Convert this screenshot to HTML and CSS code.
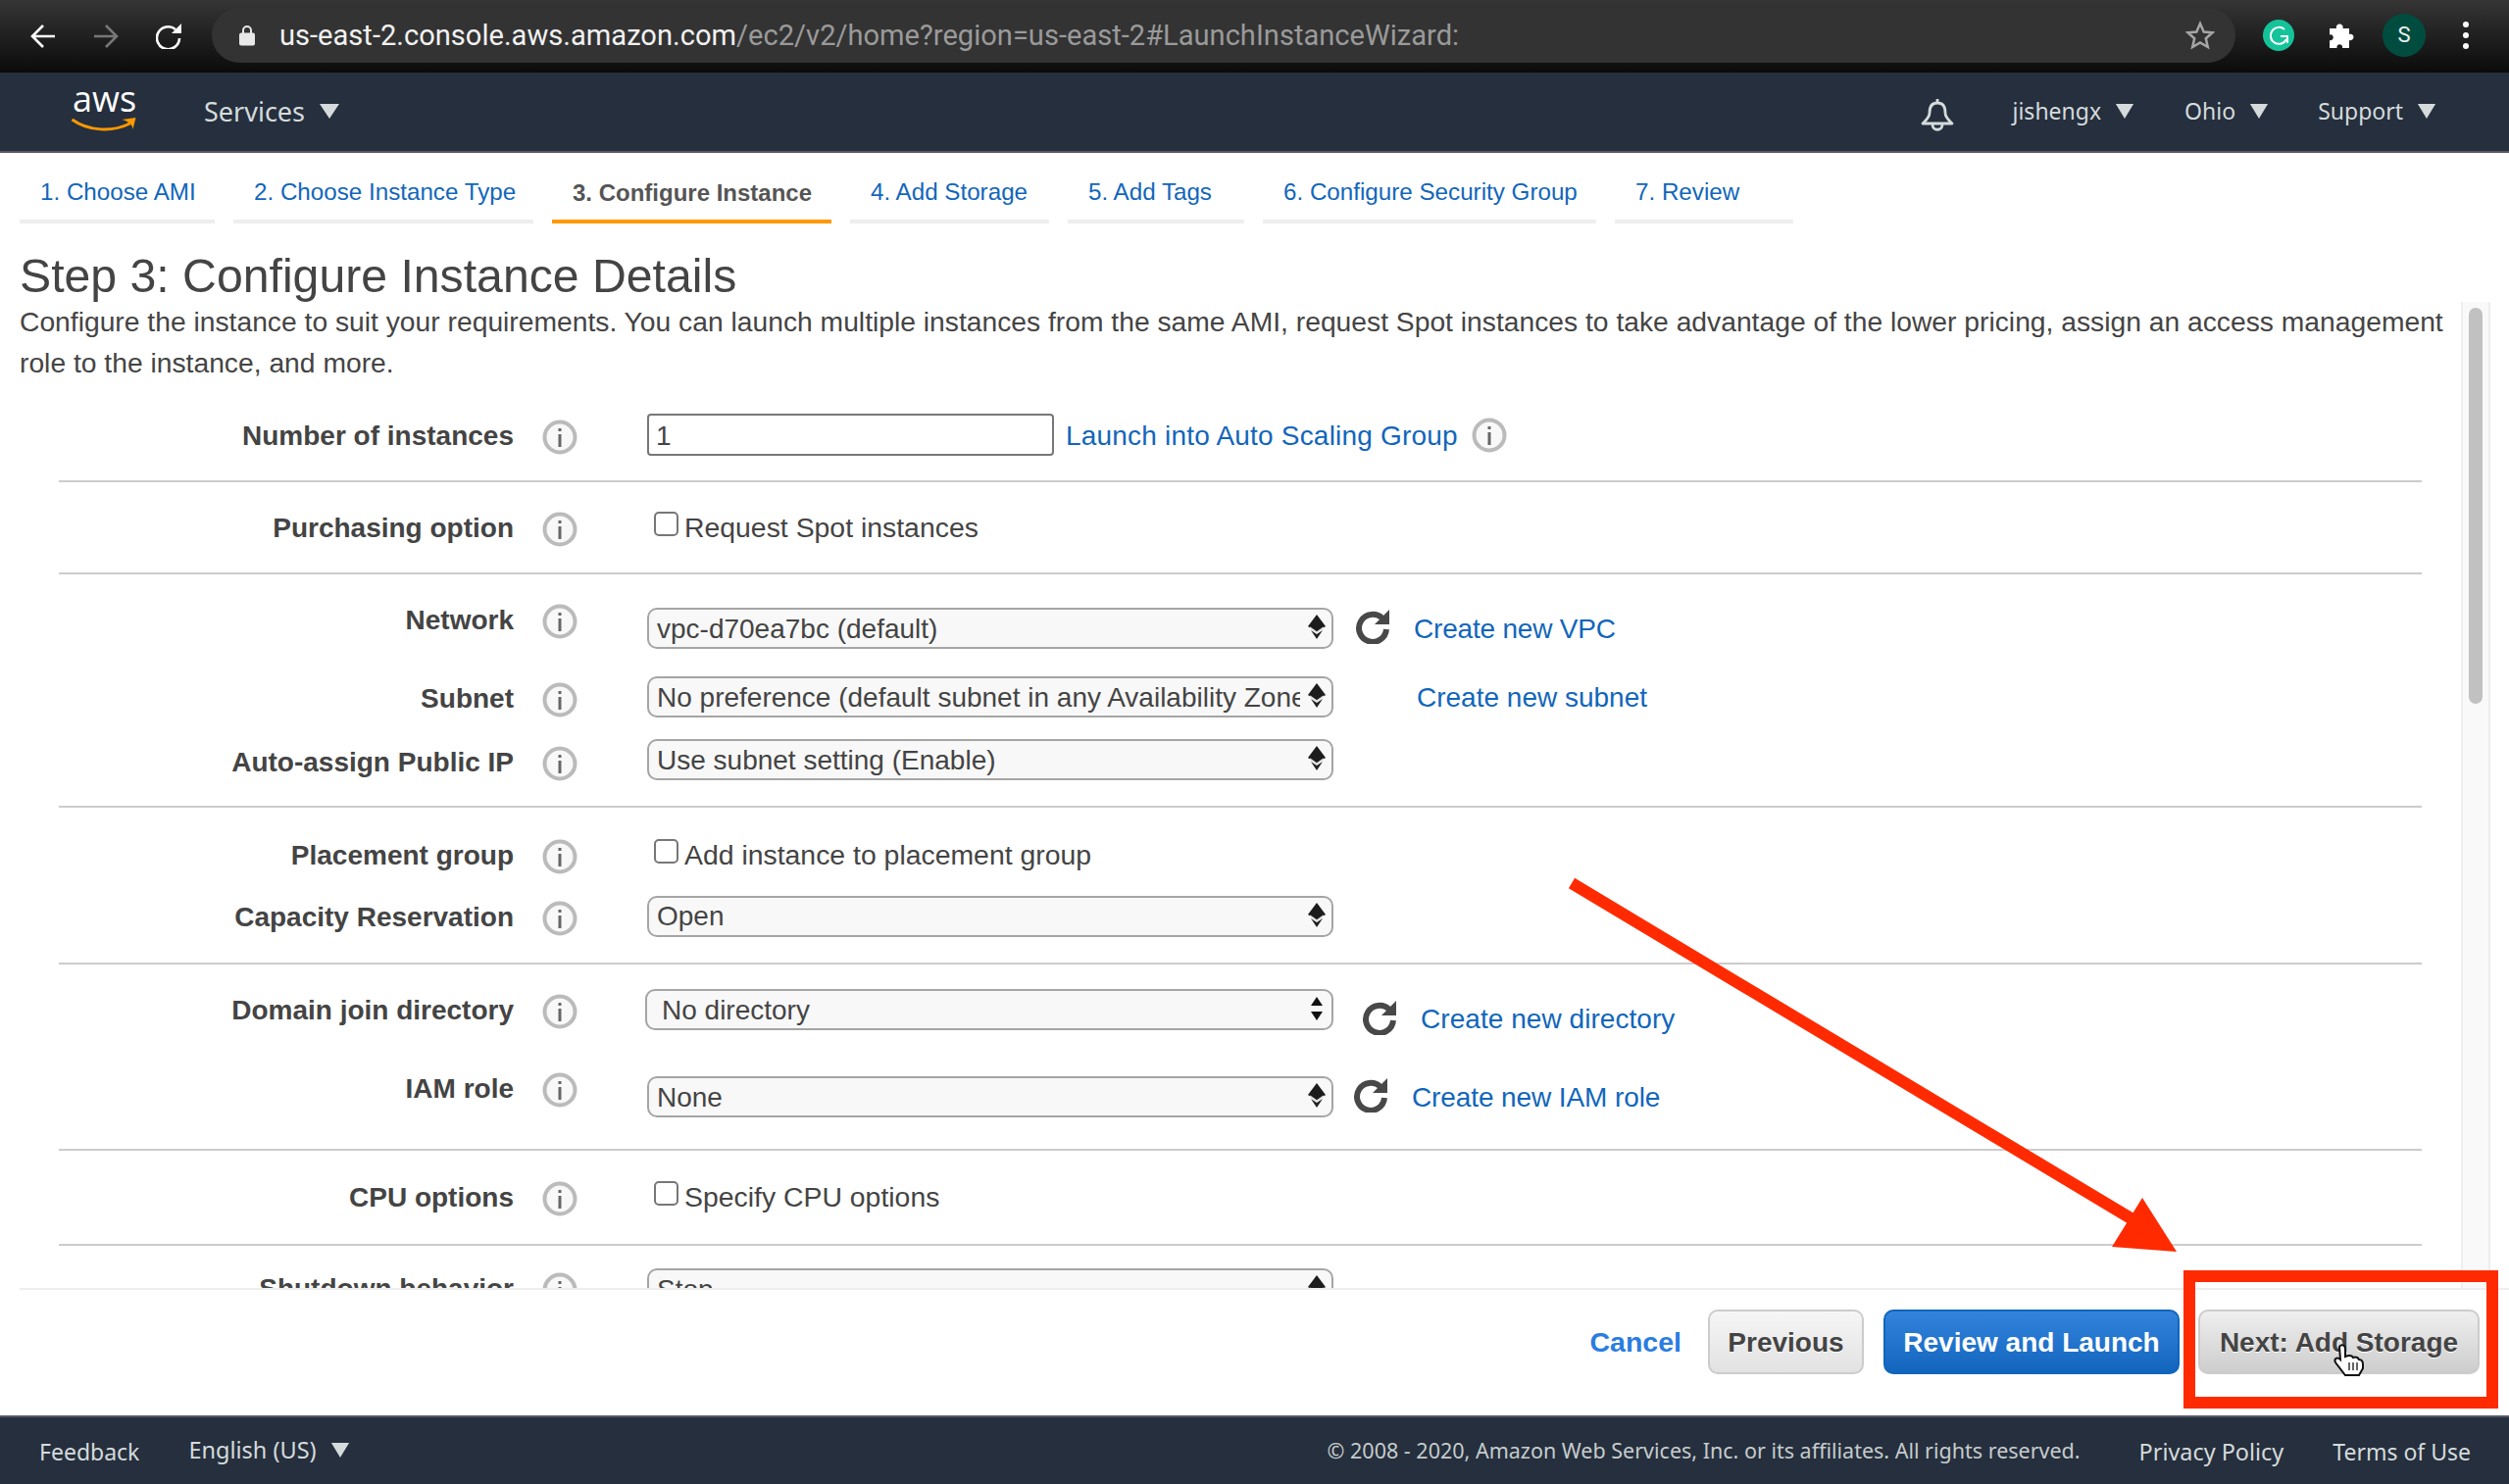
FILE: index.html
```html
<!DOCTYPE html>
<html lang="en">
<head>
<meta charset="utf-8">
<title>Launch instance wizard</title>
<link rel="stylesheet" href="styles.css">
</head>
<body>
<svg class="defs" width="0" height="0" aria-hidden="true">
  <symbol id="tri" viewBox="0 0 22 16" preserveAspectRatio="none"><path d="M1 0H21L11 16Z"/></symbol>
  <symbol id="info" viewBox="0 0 36 36"><circle cx="18" cy="18" r="15.500" fill="#f8f8f8" stroke="#bbb" stroke-width="4"/><rect x="16.500" y="15" width="3" height="13" fill="#666"/><rect x="16.500" y="9" width="3" height="3" fill="#666"/></symbol>
  <symbol id="spin" viewBox="0 0 18 26"><path d="M9 0L18 12L9 18L0 12Z" fill="#1c1c1c"/><path d="M2 13L9 18L16 13" fill="none" stroke="#ddd" stroke-width="1.500"/><path d="M3 16L9 25L15 16L9 20Z" fill="#222"/></symbol>
  <symbol id="spin-plain" viewBox="0 0 18 26"><path d="M9 1L15 10H3Z" fill="#111"/><path d="M3 16H15L9 25Z" fill="#111"/></symbol>
  <symbol id="refresh" viewBox="0 0 36 36"><path d="M28 10A14 14 0 1 0 32 21" fill="none" stroke="#484848" stroke-width="6"/><path d="M35 1V16H20Z" fill="#484848"/></symbol>
</svg>
<div class="page">
  <header class="browser">
    <svg class="bicon bicon-back" viewBox="0 0 26 26"><path d="M25 13H3M13 2L2 13L13 24" fill="none" stroke="#fff" stroke-width="2.600"/></svg>
    <svg class="bicon bicon-fwd" viewBox="0 0 26 26"><path d="M1 13H23M13 2L24 13L13 24" fill="none" stroke="#777" stroke-width="2.600"/></svg>
    <svg class="bicon bicon-reload" viewBox="0 0 26 26"><path d="M20 6A11.500 11.500 0 1 0 24 15" fill="none" stroke="#fff" stroke-width="2.600"/><path d="M26 0V10H16Z" fill="#fff"/></svg>
    <div class="omnibox">
      <svg class="lock" viewBox="0 0 16 22"><path d="M4 9V6a4 4 0 0 1 8 0V9" fill="none" stroke="#e8e8e8" stroke-width="2"/><rect y="8.500" width="16" height="13" rx="2" fill="#e8e8e8"/></svg>
      <span class="url">us-east-2.console.aws.amazon.com<span class="url-path">/ec2/v2/home?region=us-east-2#LaunchInstanceWizard:</span></span>
      <svg class="star" viewBox="0 0 30 30"><path d="M15 3L18.700 11.500L27.500 12.300L20.800 18.200L22.800 27L15 22.400L7.200 27L9.200 18.200L2.500 12.300L11.300 11.500Z" fill="none" stroke="#a6a6a6" stroke-width="2.500"/></svg>
    </div>
    <div class="ext-g"><svg viewBox="0 0 32 32"><path d="M22 10A8.500 8.500 0 1 0 24 20" fill="none" stroke="#fff" stroke-width="2"/><path d="M18 17H25V24" fill="none" stroke="#fff" stroke-width="2"/></svg></div>
    <svg class="puzzle" viewBox="0 0 29 28"><path d="M2 7H9C7.500 1 17 1 15.500 7H22V13C28 11.500 28 20.500 22 19V27H15C16 22 8.500 22 9.500 27H2V19C7 20.500 7 12 2 13.500Z" fill="#fff"/></svg>
    <div class="avatar">S</div>
    <div class="kebab"><i></i><i></i><i></i></div>
  </header>

  <nav class="console-nav">
    <div class="logo">
      <span class="logo-text">aws</span>
      <svg class="smile" viewBox="0 0 66 16"><path d="M1 3C18 15 42 16 60 7" fill="none" stroke="#ff9900" stroke-width="3"/><path d="M52 3L66 1L63 13C63 9 59 5 52 3Z" fill="#ff9900"/></svg>
    </div>
    <span class="nav-item nav-services">Services<svg class="tri tri-lg"><use href="#tri"/></svg></span>
    <span class="spacer"></span>
    <svg class="bell" viewBox="0 0 34 34"><path d="M17 1V5M17 5C10 5 9 11 9 15C9 20 5 23 2 26H32C29 23 25 20 25 15C25 11 24 5 17 5Z" fill="none" stroke="#d5dbdb" stroke-width="2.800" stroke-linejoin="round"/><path d="M12 27C12 34 22 34 22 27" fill="none" stroke="#d5dbdb" stroke-width="2.800"/></svg>
    <span class="nav-item nav-user">jishengx<svg class="tri"><use href="#tri"/></svg></span>
    <span class="nav-item nav-region">Ohio<svg class="tri"><use href="#tri"/></svg></span>
    <span class="nav-item nav-support">Support<svg class="tri"><use href="#tri"/></svg></span>
  </nav>

  <main class="main">
    <div class="tabs">
      <a class="tab tab1">1. Choose AMI</a>
      <a class="tab tab2">2. Choose Instance Type</a>
      <a class="tab tab3 active">3. Configure Instance</a>
      <a class="tab tab4">4. Add Storage</a>
      <a class="tab tab5">5. Add Tags</a>
      <a class="tab tab6">6. Configure Security Group</a>
      <a class="tab tab7">7. Review</a>
    </div>
    <h1 class="title">Step 3: Configure Instance Details</h1>
    <div class="pane">
      <div class="scroll">
        <p class="desc">Configure the instance to suit your requirements. You can launch multiple instances from the same AMI, request Spot instances to take advantage of the lower pricing, assign an access management role to the instance, and more.</p>

        <section class="sec sec1">
          <div class="row r-num">
            <div class="lab"><span class="label">Number of instances</span><svg class="info"><use href="#info"/></svg></div>
            <div class="ctl"><div class="input">1</div><a class="link link-asg">Launch into Auto Scaling Group</a><svg class="info info-inline"><use href="#info"/></svg></div>
          </div>
        </section>

        <section class="sec sec2">
          <div class="row r-spot">
            <div class="lab"><span class="label">Purchasing option</span><svg class="info"><use href="#info"/></svg></div>
            <div class="ctl"><span class="check"></span><span class="check-text">Request Spot instances</span></div>
          </div>
        </section>

        <section class="sec sec3">
          <div class="row r-network">
            <div class="lab"><span class="label">Network</span><svg class="info"><use href="#info"/></svg></div>
            <div class="ctl"><div class="select"><span class="sel-text">vpc-d70ea7bc (default)</span><svg class="spin"><use href="#spin"/></svg></div><svg class="refresh"><use href="#refresh"/></svg><a class="link link-vpc">Create new VPC</a></div>
          </div>
          <div class="row r-subnet">
            <div class="lab"><span class="label">Subnet</span><svg class="info"><use href="#info"/></svg></div>
            <div class="ctl"><div class="select"><span class="sel-text">No preference (default subnet in any Availability Zone)</span><svg class="spin"><use href="#spin"/></svg></div><a class="link link-subnet">Create new subnet</a></div>
          </div>
          <div class="row r-auto">
            <div class="lab"><span class="label">Auto-assign Public IP</span><svg class="info"><use href="#info"/></svg></div>
            <div class="ctl"><div class="select"><span class="sel-text">Use subnet setting (Enable)</span><svg class="spin"><use href="#spin"/></svg></div></div>
          </div>
        </section>

        <section class="sec sec4">
          <div class="row r-place">
            <div class="lab"><span class="label">Placement group</span><svg class="info"><use href="#info"/></svg></div>
            <div class="ctl"><span class="check"></span><span class="check-text">Add instance to placement group</span></div>
          </div>
          <div class="row r-cap">
            <div class="lab"><span class="label">Capacity Reservation</span><svg class="info"><use href="#info"/></svg></div>
            <div class="ctl"><div class="select select-cap"><span class="sel-text">Open</span><svg class="spin"><use href="#spin"/></svg></div></div>
          </div>
        </section>

        <section class="sec sec5">
          <div class="row r-domain">
            <div class="lab"><span class="label">Domain join directory</span><svg class="info"><use href="#info"/></svg></div>
            <div class="ctl"><div class="select select-domain"><span class="sel-text">No directory</span><svg class="spin"><use href="#spin-plain"/></svg></div><svg class="refresh refresh-domain"><use href="#refresh"/></svg><a class="link link-dir">Create new directory</a></div>
          </div>
          <div class="row r-iam">
            <div class="lab"><span class="label">IAM role</span><svg class="info"><use href="#info"/></svg></div>
            <div class="ctl"><div class="select"><span class="sel-text">None</span><svg class="spin"><use href="#spin"/></svg></div><svg class="refresh refresh-iam"><use href="#refresh"/></svg><a class="link link-iam">Create new IAM role</a></div>
          </div>
        </section>

        <section class="sec sec6">
          <div class="row r-cpu">
            <div class="lab"><span class="label">CPU options</span><svg class="info"><use href="#info"/></svg></div>
            <div class="ctl"><span class="check"></span><span class="check-text">Specify CPU options</span></div>
          </div>
        </section>

        <section class="sec sec7">
          <div class="row r-shut">
            <div class="lab"><span class="label">Shutdown behavior</span><svg class="info"><use href="#info"/></svg></div>
            <div class="ctl"><div class="select"><span class="sel-text">Stop</span><svg class="spin"><use href="#spin"/></svg></div></div>
          </div>
        </section>
      </div>
      <div class="scrollbar"><div class="thumb"></div></div>
    </div>
  </main>

  <div class="actions">
    <a class="cancel">Cancel</a>
    <button class="btn btn-prev">Previous</button>
    <button class="btn btn-primary">Review and Launch</button>
    <button class="btn btn-next">Next: Add Storage</button>
  </div>

  <footer class="foot">
    <span class="foot-item foot-feedback">Feedback</span>
    <span class="foot-item foot-lang">English (US)<svg class="tri"><use href="#tri"/></svg></span>
    <span class="spacer"></span>
    <span class="foot-item foot-copy">© 2008 - 2020, Amazon Web Services, Inc. or its affiliates. All rights reserved.</span>
    <span class="foot-item foot-privacy">Privacy Policy</span>
    <span class="foot-item foot-terms">Terms of Use</span>
  </footer>

  <svg class="annot" viewBox="0 0 2559 1514" width="2559" height="1514">
    <path d="M1603 901L2185 1250" fill="none" stroke="#ff2a00" stroke-width="12"/>
    <path d="M2185 1222L2220 1277L2154 1272Z" fill="#ff2a00"/>
    <rect x="2233" y="1302" width="309" height="129" fill="none" stroke="#ff2a00" stroke-width="12"/>
    <path d="M2386 1374C2388 1371 2392 1372 2392 1376V1384C2396 1382 2399 1383 2400 1385C2403 1384 2405 1385 2406 1387C2409 1387 2410 1389 2410 1392V1396L2406 1403H2392L2382 1390C2380 1386 2384 1384 2387 1387Z" fill="#fff" stroke="#111" stroke-width="2"/>
    <path d="M2396 1390V1398M2400 1390V1398M2404 1390V1398" stroke="#333" stroke-width="1.500"/>
  </svg>
</div>
</body>
</html>
```
FILE: styles.css
```css
* { box-sizing: border-box; }
html, body { margin: 0; padding: 0; background: #fff; }
body { font-family: "Liberation Sans", Arial, sans-serif; color: #444; }
.defs { position: absolute; }
.page { position: relative; width: 2559px; height: 1514px; display: flex; flex-direction: column; overflow: hidden; }
.spacer { flex: 1; }
a { color: #1166bb; text-decoration: none; }

/* browser chrome */
.browser { height: 74px; flex: none; display: flex; align-items: center; background: linear-gradient(#353535, #0b0b0b); }
.bicon { flex: none; width: 26px; height: 26px; }
.bicon-back { margin-left: 31px; }
.bicon-fwd { margin-left: 38px; }
.bicon-reload { margin-left: 38px; }
.omnibox { width: 2064px; height: 56px; margin: -2px 0 0 31px; border-radius: 28px; background: #333; display: flex; align-items: center; }
.lock { width: 16px; height: 22px; margin-left: 28px; flex: none; }
.url { margin-left: 25px; font: 29.100px Roboto, sans-serif; color: #f1f1f1; white-space: nowrap; }
.url-path { color: #9a9a9a; }
.star { width: 30px; height: 30px; margin-left: auto; margin-right: 21px; flex: none; }
.ext-g { width: 32px; height: 32px; margin: -2px 0 0 28px; border-radius: 50%; background: #15c39a; flex: none; }
.ext-g svg { display: block; width: 32px; height: 32px; }
.puzzle { width: 29px; height: 28px; margin: -2px 0 0 34px; flex: none; }
.avatar { width: 44px; height: 44px; margin: -2px 0 0 27px; border-radius: 50%; background: #004d40; color: #f1f1f1; font: 22px Roboto, sans-serif; text-align: center; line-height: 44px; flex: none; }
.kebab { margin: -2px 0 0 38px; display: flex; flex-direction: column; gap: 5px; flex: none; }
.kebab i { display: block; width: 6px; height: 6px; border-radius: 50%; background: #fff; }

/* console nav */
.console-nav { height: 82px; flex: none; display: flex; align-items: center; background: #252f3e; border-bottom: 2px solid #545b64; color: #d5dbdb; }
.logo { width: 208px; padding-left: 74px; height: 80px; position: relative; flex: none; }
.logo-text { display: block; font: 36px/1 "Open Sans", sans-serif; color: #fff; margin-top: 9px; }
.smile { position: absolute; left: 72px; top: 45px; width: 67px; height: 16px; }
.nav-item { display: flex; align-items: center; white-space: nowrap; }
.nav-services { font: 27px "Noto Sans", sans-serif; margin-top: -1px; }
.nav-user, .nav-region, .nav-support { font: 23px "Noto Sans", sans-serif; margin-top: -2px; }
.tri { width: 20px; height: 15px; fill: #d5dbdb; margin-left: 14px; flex: none; }
.tri-lg { width: 22px; }
.bell { width: 34px; height: 34px; margin-right: 60px; margin-top: 5px; flex: none; }
.nav-user { margin-right: 51px; }
.nav-region { margin-right: 50px; }
.nav-support { margin-right: 74px; }

/* main */
.main { flex: 1; min-height: 0; display: flex; flex-direction: column; }
.tabs { height: 72px; flex: none; display: flex; gap: 19px; padding-left: 20px; }
.tab { height: 72px; padding: 26px 0 0 21px; border-bottom: 4px solid #eee; font-size: 24.200px; line-height: 28px; white-space: nowrap; }
.tab1 { width: 199px; }
.tab2 { width: 306px; }
.tab3 { width: 285px; }
.tab4 { width: 203px; }
.tab5 { width: 180px; }
.tab6 { width: 340px; }
.tab7 { width: 182px; }
.tab.active { color: #555; font-weight: 700; font-size: 24px; border-bottom-color: #ff9900; padding-top: 27px; }
.title { flex: none; margin: 27px 0 0; padding-left: 20px; height: 53px; font-size: 48.200px; font-weight: 400; line-height: 53px; color: #444; }
.pane { flex: 1; min-height: 0; display: flex; padding-right: 19px; }
.scroll { flex: 1; min-width: 0; overflow: hidden; padding-left: 20px; }
.scrollbar { width: 30px; flex: none; background: #f9f9f9; border-left: 2px solid #eee; border-right: 2px solid #eee; padding: 6px 6px 0; }
.thumb { height: 404px; border-radius: 8px; background: #c1c1c1; }
.desc { margin: -1px 0 1px; font-size: 28.250px; line-height: 42px; color: #444; height: 84px; }

/* form */
.sec { margin: 0 40px; border-bottom: 2px solid #ccc; }
.sec7 { border-bottom: 0; }
.row { display: flex; align-items: flex-start; }
.lab { width: 529px; flex: none; display: flex; justify-content: flex-end; margin-right: 71px; padding-top: 1px; }
.label { font-size: 28px; font-weight: 700; line-height: 40px; white-space: nowrap; }
.info { width: 36px; height: 36px; flex: none; margin: 3px 0 0 29px; }
.ctl { display: flex; align-items: center; flex: none; }
.input { width: 415px; height: 43px; border: 2px solid #777; border-radius: 4px; padding-left: 7px; font-size: 28px; line-height: 41px; }
.link { font-size: 28px; line-height: 40px; white-space: nowrap; padding-top: 2px; }
.link-asg { margin-left: 12px; letter-spacing: 0.200px; }
.info-inline { margin: 0 0 0 14px; }
.check { width: 25px; height: 25px; margin: -7px 6px 0 7px; border: 2px solid #777; border-radius: 5px; background: #fff; flex: none; }
.check-text { font-size: 28.400px; line-height: 40px; white-space: nowrap; }
.select { position: relative; width: 700px; height: 42px; border: 2px solid #a5a5a5; border-radius: 10px; background: #f8f8f8; padding: 0 32px 0 8px; font-size: 28px; line-height: 38px; overflow: hidden; flex: none; }
.sel-text { display: block; white-space: nowrap; overflow: hidden; padding-top: 1px; }
.spin { position: absolute; right: 6px; top: 5px; width: 18px; height: 26px; }
.refresh { width: 36px; height: 36px; margin-left: 22px; flex: none; margin-top: -5px; filter: blur(0.600px); }
.link-vpc { margin-left: 24px; letter-spacing: -0.200px; }
.link-subnet { margin-left: 85px; }
.select-cap .sel-text { padding-top: 0; }
.r-domain .ctl { align-items: flex-start; }
.select-domain { margin-left: -2px; width: 702px; padding-left: 15px; }
.refresh-domain { margin-left: 29px; margin-top: 11px; }
.link-dir { margin-left: 24px; margin-top: 9px; letter-spacing: 0.050px; }
.refresh-iam { margin-left: 20px; margin-top: -5px; }
.link-iam { margin-left: 24px; letter-spacing: -0.100px; }

.sec1 { padding-top: 30px; height: 100px; }
.r-num { height: 68px; }
.r-num .lab { margin-top: 2px; }
.sec2 { padding-top: 26px; height: 94px; }
.r-spot { height: 66px; }
.sec3 { padding-top: 26px; height: 238px; }
.r-network { height: 78px; }
.r-network .ctl { margin-top: 8px; }
.r-subnet { height: 64px; }
.r-subnet .lab { margin-top: 2px; }
.r-auto { height: 68px; }
.r-auto .lab { margin-top: 3px; }
.sec4 { padding-top: 28px; height: 160px; }
.r-place { height: 62px; }
.r-cap { height: 68px; }
.r-cap .lab { margin-top: 1px; }
.sec5 { padding-top: 25px; height: 190px; }
.r-domain { height: 81px; }
.r-domain .lab { margin-top: 1px; }
.r-iam { height: 82px; }
.r-iam .ctl { margin-top: 8px; }
.sec6 { padding-top: 27px; height: 97px; }
.r-cpu { height: 68px; }
.sec7 { padding-top: 23px; }

/* action bar */
.actions { height: 130px; flex: none; margin-left: 20px; border-top: 2px solid #eee; display: flex; align-items: flex-start; justify-content: flex-end; padding: 20px 30px 0 0; background: #fff; }
.cancel { font-size: 28.500px; font-weight: 700; line-height: 67px; color: #2a7de1; margin-right: 27px; }
.btn { height: 66px; border: 2px solid #ccc; border-radius: 10px; font: 700 28px "Liberation Sans", Arial, sans-serif; color: #444; background: linear-gradient(#f6f6f6, #e2e2e2); text-shadow: 0 1px 0 #fff; padding: 2px 0 0; }
.btn-prev { width: 159px; margin-right: 20px; }
.btn-primary { width: 302px; margin-right: 19px; color: #fff; background: linear-gradient(#3383dd, #1265bd); border-color: #1166bb; text-shadow: none; }
.btn-next { width: 287px; background: linear-gradient(#efefef, #cdcdcd); }

/* footer */
.foot { height: 70px; flex: none; display: flex; align-items: center; background: #252f3e; border-top: 2px solid #545b64; color: #d5dbdb; }
.foot-item { display: flex; align-items: center; white-space: nowrap; font: 23px "Noto Sans", sans-serif; }
.foot-feedback { margin-left: 40px; margin-top: 2px; }
.foot-lang { margin-left: 50px; margin-top: -2px; font-size: 23.500px; }
.foot-copy { font-size: 21.500px; margin-top: -2px; color: #c6cccc; margin-right: 60px; }
.foot-privacy { margin-right: 50px; margin-top: 2px; font-size: 23.400px; }
.foot-terms { margin-right: 39px; margin-top: 2px; }

.annot { position: absolute; left: 0; top: 0; pointer-events: none; }
```
